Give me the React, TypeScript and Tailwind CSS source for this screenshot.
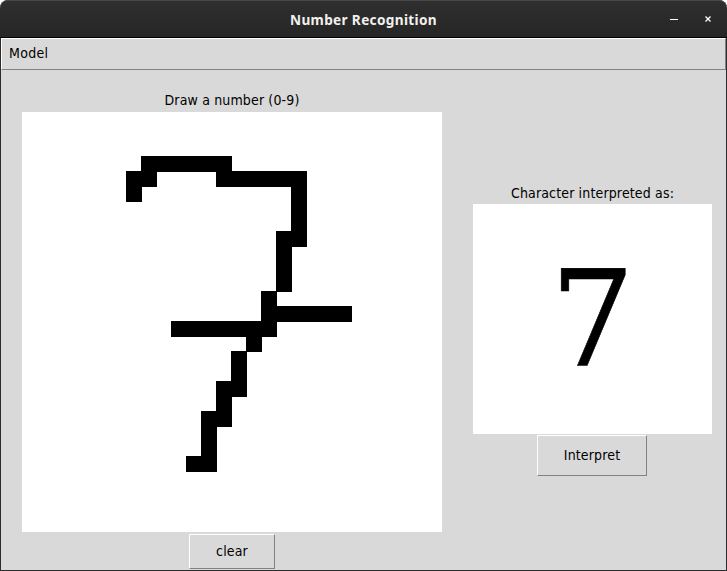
const RUNS: [row: number, from: number, to: number][] = [
  [3, 8, 13], [4, 7, 8], [4, 13, 18], [5, 7, 7], [5, 18, 18], [6, 18, 18], [7, 18, 18],
  [8, 17, 18], [9, 17, 17], [10, 17, 17], [11, 17, 17], [12, 16, 16], [13, 16, 21],
  [14, 10, 16], [15, 15, 15], [16, 14, 14], [17, 14, 14], [18, 13, 14], [19, 13, 13],
  [20, 12, 13], [21, 12, 12], [22, 12, 12], [23, 11, 12],
];

const CELL = 15;

function TitleBar() {
  return (
    <header className="relative flex h-[38px] shrink-0 items-center justify-center rounded-t-[8px] border-b border-black bg-linear-to-b from-[#2f2f2f] to-[#262626] shadow-[inset_0_1px_0_#474747]">
      <h1 className="pt-[2px] font-['Noto_Sans',sans-serif] text-[13.6px] leading-5 font-bold tracking-[0.34px] text-[#f2f1ee]">
        Number Recognition
      </h1>
      <div className="absolute top-0 right-0 flex h-full w-[60px] items-center">
        <svg width="60" height="38" shapeRendering="crispEdges">
          <path d="M3 19.5h8" stroke="#fff" strokeWidth="1" />
          <path d="M38.5 16.5l5 5M43.5 16.5l-5 5" stroke="#fff" strokeWidth="1.3" shapeRendering="auto" />
        </svg>
      </div>
    </header>
  );
}

function DrawingCanvas() {
  return (
    <svg width="420" height="420" className="block bg-white" shapeRendering="crispEdges">
      {RUNS.map(([row, from, to]) => (
        <rect
          key={`${row}-${from}`}
          x={from * CELL - 1}
          y={row * CELL - 1}
          width={(to - from + 1) * CELL + 1}
          height={CELL + 1}
        />
      ))}
    </svg>
  );
}

const BUTTON =
  "flex items-center justify-center border border-t-white border-l-white border-r-[#828282] border-b-[#828282] bg-[#d9d9d9] pb-[2px] tracking-[0.15px]";

export default function App() {
  return (
    <div className="flex h-[571px] w-[727px] flex-col bg-white font-['DejaVu_Sans_Condensed','DejaVu_Sans',sans-serif] text-[14px] leading-5 tracking-[0.15px] text-black">
      <TitleBar />
      <div className="flex min-h-0 flex-1 flex-col border-r border-b border-l border-[#2c2b2e] bg-[#d9d9d9]">
        <nav className="flex h-8 shrink-0 border border-t-white border-l-white border-r-[#828282] border-b-[#828282] pt-1 pl-[7px]">
          <span className="tracking-[0.3px]">Model</span>
        </nav>
        <main className="flex">
          <section className="ml-[21px] flex w-[420px] flex-col items-center pt-[20px]">
            <label className="flex h-[22px] items-center pb-[2px]">Draw a number (0-9)</label>
            <DrawingCanvas />
            <button className={`${BUTTON} mt-[2px] h-[35px] w-[86px]`}>clear</button>
          </section>
          <section className="ml-[31px] flex w-[239px] flex-col items-center pt-[112px]">
            <label className="flex h-[22px] items-center">Character interpreted as:</label>
            <div className="flex h-[230px] w-full items-center justify-center bg-white">
              <span className="font-['DejaVu_Serif',serif] text-[133.33px] leading-none tracking-normal [-webkit-text-stroke:0.6px_black]">7</span>
            </div>
            <button className={`${BUTTON} mt-px mr-px h-[41px] w-[110px]`}>Interpret</button>
          </section>
        </main>
      </div>
    </div>
  );
}
